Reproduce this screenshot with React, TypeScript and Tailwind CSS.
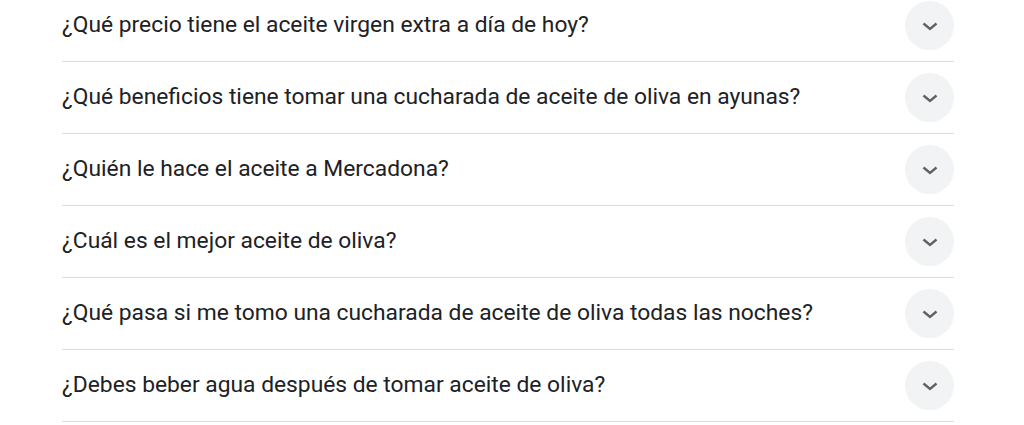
const questions = [
  '¿Qué precio tiene el aceite virgen extra a día de hoy?',
  '¿Qué beneficios tiene tomar una cucharada de aceite de oliva en ayunas?',
  '¿Quién le hace el aceite a Mercadona?',
  '¿Cuál es el mejor aceite de oliva?',
  '¿Qué pasa si me tomo una cucharada de aceite de oliva todas las noches?',
  '¿Debes beber agua después de tomar aceite de oliva?',
];

function Chevron() {
  return (
    <svg width="24" height="24" viewBox="0 0 24 24" fill="none" className="text-[#5f6368]">
      <path d="M5.5 9.5 L12 15 L18.5 9.5" stroke="currentColor" strokeWidth="2.4" strokeLinejoin="miter" />
    </svg>
  );
}

export default function App() {
  return (
    <div className="w-[1024px] h-[425px] overflow-hidden bg-white" style={{ fontFamily: 'Roboto, Arial, sans-serif' }}>
      <div className="ml-[62px] w-[892px] mt-[-10px]">
        {questions.map((q) => (
          <div key={q} className="flex items-center justify-between h-[72px] border-b border-[#dadce0]">
            <span className="text-[22.8px] text-[#202124]">{q}</span>
            <div className="w-[49px] h-[49px] rounded-full bg-[#f1f3f4] flex items-center justify-center">
              <Chevron />
            </div>
          </div>
        ))}
      </div>
    </div>
  );
}
